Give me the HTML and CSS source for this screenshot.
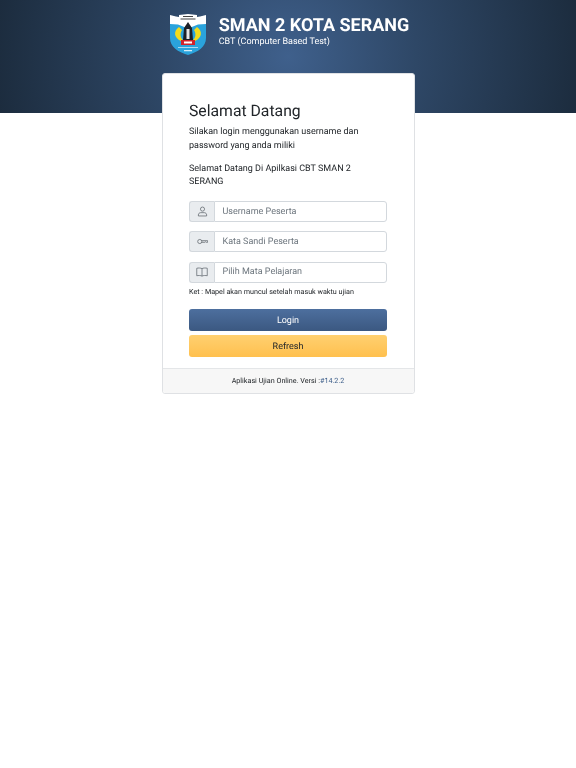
FILE: index.html
```html
<!DOCTYPE html>
<html lang="id">
<head>
  <meta charset="UTF-8">
  <meta name="viewport" content="width=device-width, initial-scale=1.0">
  <title>CBT SMAN 2 Kota Serang</title>
  <link rel="stylesheet" href="styles.css">
</head>
<body>
  <div class="top-bg"></div>

  <header class="brand">
    <svg class="logo" viewBox="0 0 36 41" width="36" height="41">
      <path d="M0 1l6 1.500L9 3V1l9-1 9 1v2l3-.5L36 1v13H0z" fill="#fff"/>
      <path d="M0 10l8 .5 10 4 10-4 8-.5v14c0 9-8 14-18 17C8 38 0 33 0 24z" fill="#2aa3dc"/>
      <path d="M9 13c-6 4-5 11 2 14l4 1c-4-3-6-7-3-12z" fill="#f2dc1c"/>
      <path d="M27 13c6 4 5 11-2 14l-4 1c4-3 6-7 3-12z" fill="#f2dc1c"/>
      <path d="M18 8l4 6 1 12H13l1-12z" fill="#1d2026"/>
      <path d="M16.500 15h3v10h-3z" fill="#e6e6e6"/>
      <path d="M11 26h14v5H11z" fill="#d2232a"/>
      <path d="M14 27.500h8v2h-8z" fill="#fff"/>
      <path d="M8 33h20v.8H8zM14 36h8v1.200h-8z" fill="#d5edf8"/>
      <path d="M13 2h10v1H13zM10.500 4.500h15v1h-15z" fill="#444"/>
    </svg>
    <div class="brand-text">
      <h1>SMAN 2 KOTA SERANG</h1>
      <p>CBT (Computer Based Test)</p>
    </div>
  </header>

  <main class="card">
    <div class="card-body">
      <h2>Selamat Datang</h2>
      <p class="lead">Silakan login menggunakan username dan password yang anda miliki</p>
      <p class="lead welcome">Selamat Datang Di Apilkasi CBT SMAN 2 SERANG</p>

      <form>
        <div class="input-group">
          <span class="addon">
            <svg viewBox="0 0 16 16" width="11" height="11" fill="none" stroke="#5f666d" stroke-width="1.100">
              <circle cx="8" cy="4.500" r="3"/>
              <path d="M2 14.500v-1.500c0-2 1.500-3.300 3.300-3.300h5.400c1.800 0 3.300 1.300 3.300 3.300v1.500z"/>
            </svg>
          </span>
          <input type="text" placeholder="Username Peserta">
        </div>
        <div class="input-group">
          <span class="addon">
            <svg viewBox="0 0 16 16" width="11" height="11" fill="none" stroke="#5f666d" stroke-width="1.100">
              <circle cx="4" cy="8" r="3"/>
              <path d="M7 6.800h8.500v2.400h-2l-1-.8-1 .8H7"/>
            </svg>
          </span>
          <input type="password" placeholder="Kata Sandi Peserta">
        </div>
        <div class="input-group mapel">
          <span class="addon">
            <svg viewBox="0 0 16 16" width="12" height="12" fill="none" stroke="#5f666d" stroke-width="1">
              <path d="M8 3.500C6.500 2.500 3 2.500 1 3v10c2-.5 5.500-.5 7 .5 1.500-1 5-1 7-.5V3c-2-.5-5.500-.5-7 .5zM8 3.500v10"/>
            </svg>
          </span>
          <input type="text" placeholder="Pilih Mata Pelajaran">
        </div>
        <p class="note">Ket : Mapel akan muncul setelah masuk waktu ujian</p>

        <button type="button" class="btn btn-login">Login</button>
        <button type="button" class="btn btn-refresh">Refresh</button>
      </form>
    </div>
    <footer class="card-footer">Aplikasi Ujian Online. Versi :<span class="version">#14.2.2</span></footer>
  </main>
</body>
</html>
```

FILE: styles.css
```css
* {
  margin: 0;
  padding: 0;
  box-sizing: border-box;
}

body {
  background: #fff;
  color: #212529;
  font-family: Roboto, sans-serif;
  font-size: 9px;
  text-rendering: geometricPrecision;
  position: relative;
  min-height: 100vh;
}

.top-bg {
  position: absolute;
  top: 0;
  left: 0;
  right: 0;
  height: 113px;
  background: radial-gradient(circle at center, #3f608c 0%, #2e4766 44%, #1c2c3e 100%);
}

/* the reference is a scaled down capture, text is a little soft */
.brand, .card {
  filter: blur(0.3px);
}

.brand {
  position: relative;
  display: flex;
  align-items: flex-start;
  justify-content: center;
  gap: 13px;
  height: 73px;
  padding: 14px 0 0 3px;
}

.logo {
  flex: none;
}

.brand-text {
  margin-top: 1px;
}

.brand-text h1 {
  color: #fff;
  font-size: 18px;
  font-weight: 700;
  line-height: 22px;
}

.brand-text p {
  color: #fff;
  font-size: 9px;
  line-height: 11px;
}

.card {
  position: relative;
  width: 253px;
  margin: 0 auto;
  background: #fff;
  border: 1px solid #dfe1e4;
  border-radius: 3px;
}

.card-body {
  padding: 26.500px 26.500px 11px;
}

h2 {
  font-size: 15.750px;
  font-weight: 400;
  line-height: 19px;
  margin-bottom: 6.500px;
}

.lead {
  font-size: 9px;
  line-height: 13.500px;
}

.welcome {
  margin-top: 9.500px;
  margin-bottom: 11.500px;
}

.input-group {
  display: flex;
  height: 21px;
  margin-bottom: 9.250px;
}

.mapel {
  margin-bottom: 3px;
}

.addon {
  flex: none;
  width: 25px;
  display: flex;
  align-items: center;
  justify-content: center;
  background: #e9ecef;
  border: 1px solid #d3d8dd;
  border-right: 0;
  border-radius: 3px 0 0 3px;
}

.input-group input {
  flex: 1;
  min-width: 0;
  padding: 0 7.500px;
  border: 1px solid #d3d8dd;
  border-radius: 0 3px 3px 0;
  font-family: Roboto, sans-serif;
  font-size: 9px;
  text-rendering: geometricPrecision;
  color: #495057;
}

.input-group input::placeholder {
  color: #6c757d;
}

.note {
  font-size: 7.200px;
  line-height: 11px;
  margin-bottom: 12.500px;
}

.btn {
  display: block;
  width: 100%;
  height: 22px;
  padding-top: 1px;
  border: 0;
  border-radius: 3px;
  font-family: Roboto, sans-serif;
  font-size: 9px;
  text-rendering: geometricPrecision;
  cursor: pointer;
}

.btn-login {
  background: linear-gradient(#4d6f9e, #3b5881);
  color: #fff;
  margin-bottom: 4px;
}

.btn-refresh {
  background: linear-gradient(#ffd070, #ffc04e);
  color: #212529;
}

.card-footer {
  background: #f7f7f7;
  border-top: 1px solid #e4e6e8;
  border-radius: 0 0 3px 3px;
  height: 25px;
  line-height: 24px;
  text-align: center;
  font-size: 7.200px;
}

.version {
  color: #3e5f8a;
}
```
